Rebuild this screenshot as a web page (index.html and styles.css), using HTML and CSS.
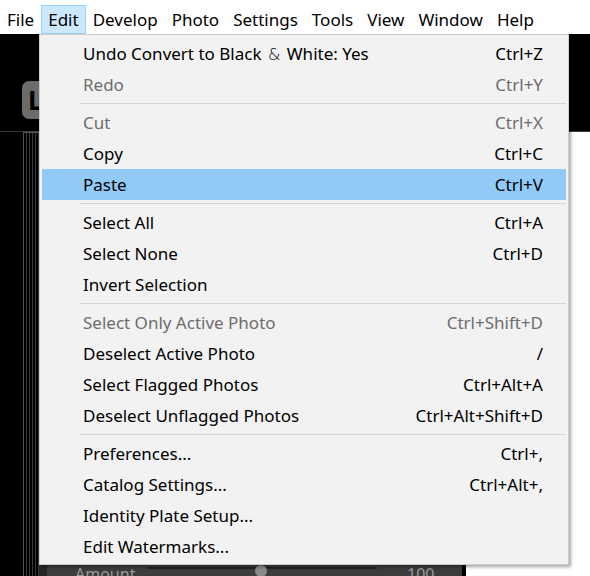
FILE: index.html
```html
<!DOCTYPE html>
<html>
<head>
<meta charset="utf-8">
<link rel="stylesheet" href="styles.css">
</head>
<body>
<div class="menubar">
  <span class="mb-item">File</span>
  <span class="mb-item hot">Edit</span>
  <span class="mb-item">Develop</span>
  <span class="mb-item">Photo</span>
  <span class="mb-item">Settings</span>
  <span class="mb-item">Tools</span>
  <span class="mb-item">View</span>
  <span class="mb-item">Window</span>
  <span class="mb-item">Help</span>
</div>
<div class="app">
  <div class="toolbar">
    <div class="badge">L</div>
  </div>
  <div class="workarea">
    <div class="leftside">
      <div class="frame">
        <div class="stripes"></div>
        <div class="panel">
          <div class="spacer"></div>
          <div class="slider-row">
            <span class="s-label">Amount</span>
            <div class="track"><div class="thumb"></div></div>
            <span class="s-value">100</span>
          </div>
        </div>
      </div>
    </div>
    <div class="rightside"></div>
  </div>
</div>

<div class="menu">
  <div class="item"><span>Undo Convert to Black <span class="amp">&amp;</span> White: Yes</span><span>Ctrl+Z</span></div>
  <div class="item disabled"><span>Redo</span><span>Ctrl+Y</span></div>
  <div class="sep"></div>
  <div class="item disabled"><span>Cut</span><span>Ctrl+X</span></div>
  <div class="item"><span>Copy</span><span>Ctrl+C</span></div>
  <div class="item selected"><span>Paste</span><span>Ctrl+V</span></div>
  <div class="sep"></div>
  <div class="item"><span>Select All</span><span>Ctrl+A</span></div>
  <div class="item"><span>Select None</span><span>Ctrl+D</span></div>
  <div class="item"><span>Invert Selection</span><span></span></div>
  <div class="sep"></div>
  <div class="item disabled"><span>Select Only Active Photo</span><span>Ctrl+Shift+D</span></div>
  <div class="item"><span>Deselect Active Photo</span><span>/</span></div>
  <div class="item"><span>Select Flagged Photos</span><span>Ctrl+Alt+A</span></div>
  <div class="item"><span>Deselect Unflagged Photos</span><span>Ctrl+Alt+Shift+D</span></div>
  <div class="sep"></div>
  <div class="item"><span>Preferences...</span><span>Ctrl+,</span></div>
  <div class="item"><span>Catalog Settings...</span><span>Ctrl+Alt+,</span></div>
  <div class="item"><span>Identity Plate Setup...</span><span></span></div>
  <div class="item"><span>Edit Watermarks...</span><span></span></div>
</div>
</body>
</html>
```
FILE: styles.css
```css
html, body {
  margin: 0;
  padding: 0;
}
body {
  width: 590px;
  height: 576px;
  overflow: hidden;
  position: relative;
  font-family: "Noto Sans", "Open Sans", sans-serif;
  font-size: 17px;
  color: #000;
  background: #fff;
}
.menubar {
  height: 34px;
  background: #fff;
  display: flex;
  align-items: flex-start;
}
.mb-item {
  height: 29px;
  margin-top: 5px;
  line-height: 27px;
  padding: 0 6px;
  box-sizing: border-box;
  border: 1px solid transparent;
}
.mb-item.hot {
  background: #cce8ff;
  border-color: #99d1ff;
}
.app {
  background: #000;
}
.toolbar {
  height: 98px;
  display: flex;
  align-items: flex-start;
  border-bottom: 1px solid #3a3a3a;
  box-sizing: border-box;
}
.badge {
  margin-top: 47px;
  margin-left: 22px;
  width: 40px;
  height: 38px;
  border-radius: 7px;
  background: #6b6b6b;
  color: #000;
  font-weight: bold;
  font-size: 26px;
  line-height: 38px;
  padding-left: 6px;
  box-sizing: border-box;
}
.workarea {
  height: 460px;
  display: flex;
}
.leftside {
  width: 466px;
  background: #000;
  display: flex;
  padding-right: 4px;
  box-sizing: border-box;
}
.frame {
  margin-left: 23px;
  flex: 1;
  border-left: 1px solid #555;
  border-top: 1px solid #555;
  display: flex;
}
.stripes {
  width: 15px;
  background: repeating-linear-gradient(90deg, #000 0, #000 2px, #3a3a3a 2px, #3a3a3a 3px);
  border-right: 8px solid #262626;
}
.panel {
  flex: 1;
  background: #3c3c3c;
  display: flex;
  flex-direction: column;
}
.spacer {
  flex: 1;
}
.slider-row {
  height: 36px;
  display: flex;
  align-items: center;
  color: #9a9a9a;
  font-size: 16px;
}
.s-label {
  margin-left: 28px;
  width: 72px;
}
.track {
  width: 230px;
  height: 2px;
  background: #222;
  position: relative;
  margin-top: -12px;
}
.thumb {
  position: absolute;
  left: 108px;
  top: -2px;
  width: 12px;
  height: 12px;
  border-radius: 50%;
  background: #8a8a8a;
}
.s-value {
  margin-left: 30px;
}
.rightside {
  flex: 1;
  background: #fff;
}
.menu {
  position: absolute;
  left: 39px;
  top: 34px;
  width: 530px;
  box-sizing: border-box;
  background: #f2f2f2;
  border: 1px solid #cccccc;
  padding: 3px 2px 2px 2px;
  box-shadow: 2px 2px 3px rgba(0, 0, 0, 0.35);
}
.item {
  height: 31px;
  display: flex;
  justify-content: space-between;
  align-items: center;
  padding: 0 23px 0 41px;
}
.item.disabled {
  color: #6d6d6d;
}
.item.selected {
  background: #91c9f7;
}
.amp {
  font-weight: 300;
  padding: 0 2px;
  font-family: "DejaVu Sans", sans-serif;
  font-size: 16px;
}
.sep {
  height: 1px;
  background: #d7d7d7;
  margin: 3px 0 3px 38px;
}
```
